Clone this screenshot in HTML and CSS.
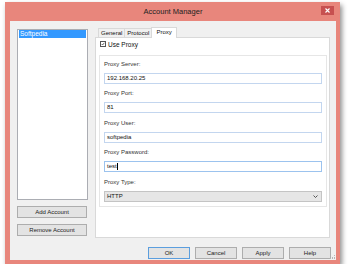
FILE: index.html
```html
<!DOCTYPE html>
<html>
	<head>
		<meta charset="utf-8"/>
		<title>Account Manager</title>
		<link rel="stylesheet" href="styles.css">
	</head>
	<body>
		<div class="window">
			<div class="titlebar">
				<span class="spacer"></span>
				<span class="title">Account Manager</span>
				<span class="close">
					<svg width="5" height="5" viewBox="0 0 5 5"><path d="M0.5 0.5L4.5 4.5M4.5 0.5L0.5 4.5" stroke="#fff" stroke-width="1.1"/></svg>
				</span>
			</div>
			<div class="client">
				<div class="content">
					<div class="side">
						<div class="listbox">
							<div class="item selected">Softpedia</div>
						</div>
						<div class="btn side-btn">Add Account</div>
						<div class="btn side-btn">Remove Account</div>
					</div>
					<div class="main">
						<div class="tabs">
							<span class="tab">General</span>
							<span class="tab">Protocol</span>
							<span class="tab active">Proxy</span>
						</div>
						<div class="panel">
							<div class="check">
								<span class="box">
									<svg width="6" height="6" viewBox="0 0 6 6"><path d="M1 3L2.4 4.5L5 1.2" fill="none" stroke="#222" stroke-width="1"/></svg>
								</span>
								<span>Use Proxy</span>
							</div>
							<div class="group">
								<div class="field">
									<div class="label">Proxy Server:</div>
									<div class="input">192.168.20.25</div>
								</div>
								<div class="field">
									<div class="label">Proxy Port:</div>
									<div class="input">81</div>
								</div>
								<div class="field">
									<div class="label">Proxy User:</div>
									<div class="input">softpedia</div>
								</div>
								<div class="field">
									<div class="label">Proxy Password:</div>
									<div class="input focus">test<span class="caret"></span></div>
								</div>
								<div class="field">
									<div class="label">Proxy Type:</div>
									<div class="combo">
										<span>HTTP</span>
										<svg width="5" height="3" viewBox="0 0 5 3"><path d="M0.5 0.5L2.5 2.5L4.5 0.5" fill="none" stroke="#444" stroke-width="0.9"/></svg>
									</div>
								</div>
							</div>
						</div>
					</div>
				</div>
				<div class="footer">
					<div class="btn default">OK</div>
					<div class="btn">Cancel</div>
					<div class="btn">Apply</div>
					<div class="btn">Help</div>
				</div>
				<svg class="grip" width="5" height="5" viewBox="0 0 5 5"><path d="M4 1h1v1h-1zM2 3h1v1h-1zM4 3h1v1h-1zM0 5h1v-1h-1zM2 5h1v-1h-1zM4 5h1v-1h-1z" fill="#b5b5b5"/></svg>
			</div>
		</div>
	</body>
</html>
```
FILE: styles.css
```css
/* reset */
* {
	margin: 0;
	padding: 0;
	box-sizing: border-box;
}

body {
	background-color: #fff;
	font-family: "Liberation Sans", Arial, sans-serif;
	font-size: 6px;
	color: #111;
}

/* window frame */
.window {
	width: 335px;
	height: 262px;
	margin: 2px 0 0 5px;
	padding: 0 4px 4px 5px;
	background-color: #e8867c;
	box-shadow: 2px 3px 5px rgba(0, 0, 0, 0.45);
	display: flex;
	flex-direction: column;
}

.titlebar {
	height: 19px;
	display: flex;
	align-items: center;
}

.spacer {
	width: 15px;
}

.title {
	flex: 1;
	text-align: center;
	font-size: 7.5px;
	color: #222;
}

.close {
	align-self: flex-start;
	width: 13px;
	height: 9px;
	margin: 4px 2px 0 0;
	background-color: #c75050;
	display: flex;
	align-items: center;
	justify-content: center;
}

.client {
	flex: 1;
	position: relative;
	background-color: #f0f0f0;
	padding-top: 6px;
	display: flex;
	flex-direction: column;
}

.content {
	display: flex;
	padding-left: 7px;
}

/* left column */
.side {
	width: 71px;
	margin-top: 2px;
	display: flex;
	flex-direction: column;
}

.listbox {
	height: 171px;
	background-color: #fff;
	border: 1px solid #abadb3;
	padding: 0 1px;
}

.item {
	height: 8px;
	line-height: 8px;
	padding-left: 1px;
	font-size: 6.5px;
}

.selected {
	background-color: #3399ff;
	color: #fff;
}

.btn {
	width: 42px;
	height: 12px;
	line-height: 10px;
	text-align: center;
	background-color: #e3e3e3;
	border: 1px solid #adadad;
	color: #222;
}

.side-btn {
	width: 70px;
	margin-top: 6px;
}

.default {
	border-color: #5b9ede;
}

/* tabs */
.main {
	width: 235px;
	margin-left: 7px;
}

.tabs {
	height: 10px;
	padding-left: 3px;
	display: flex;
	align-items: flex-end;
}

.tab {
	height: 9px;
	line-height: 8px;
	padding: 0 2px;
	margin-right: -1px;
	background-color: #f0f0f0;
	border: 1px solid #d9d9d9;
	border-bottom: none;
}

.tab.active {
	height: 11px;
	margin-bottom: -1px;
	padding: 0 4px;
	background-color: #fff;
	position: relative;
}

.panel {
	height: 201px;
	background-color: #fff;
	border: 1px solid #d9d9d9;
	padding: 3px 0 0 3px;
}

.check {
	height: 6px;
	margin-left: 1px;
	display: flex;
	align-items: center;
	gap: 2px;
	font-size: 6.5px;
}

.box {
	width: 6px;
	height: 6px;
	border: 1px solid #555;
	display: flex;
	align-items: center;
	justify-content: center;
}

.group {
	width: 228px;
	margin-top: 8px;
	padding: 4px;
	border: 1px solid #e6e6e6;
	display: flex;
	flex-direction: column;
	gap: 5.4px;
}

.label {
	height: 8px;
	line-height: 8px;
	margin-bottom: 5px;
	color: #333;
}

.input {
	height: 11px;
	line-height: 9px;
	padding-left: 2px;
	border: 1px solid #c3d6ef;
	color: #111;
}

.focus {
	border-color: #9cc3ee;
}

.caret {
	display: inline-block;
	width: 1px;
	height: 7px;
	vertical-align: middle;
	background-color: #000;
}

.combo {
	height: 11px;
	padding: 0 3px 0 2px;
	background-color: #e6e6e6;
	border: 1px solid #c4c4c4;
	display: flex;
	align-items: center;
	justify-content: space-between;
}

/* dialog buttons */
.footer {
	margin-top: 9px;
	padding-right: 5px;
	display: flex;
	justify-content: flex-end;
	gap: 5px;
}

.grip {
	position: absolute;
	right: 1px;
	bottom: 1px;
}
```
